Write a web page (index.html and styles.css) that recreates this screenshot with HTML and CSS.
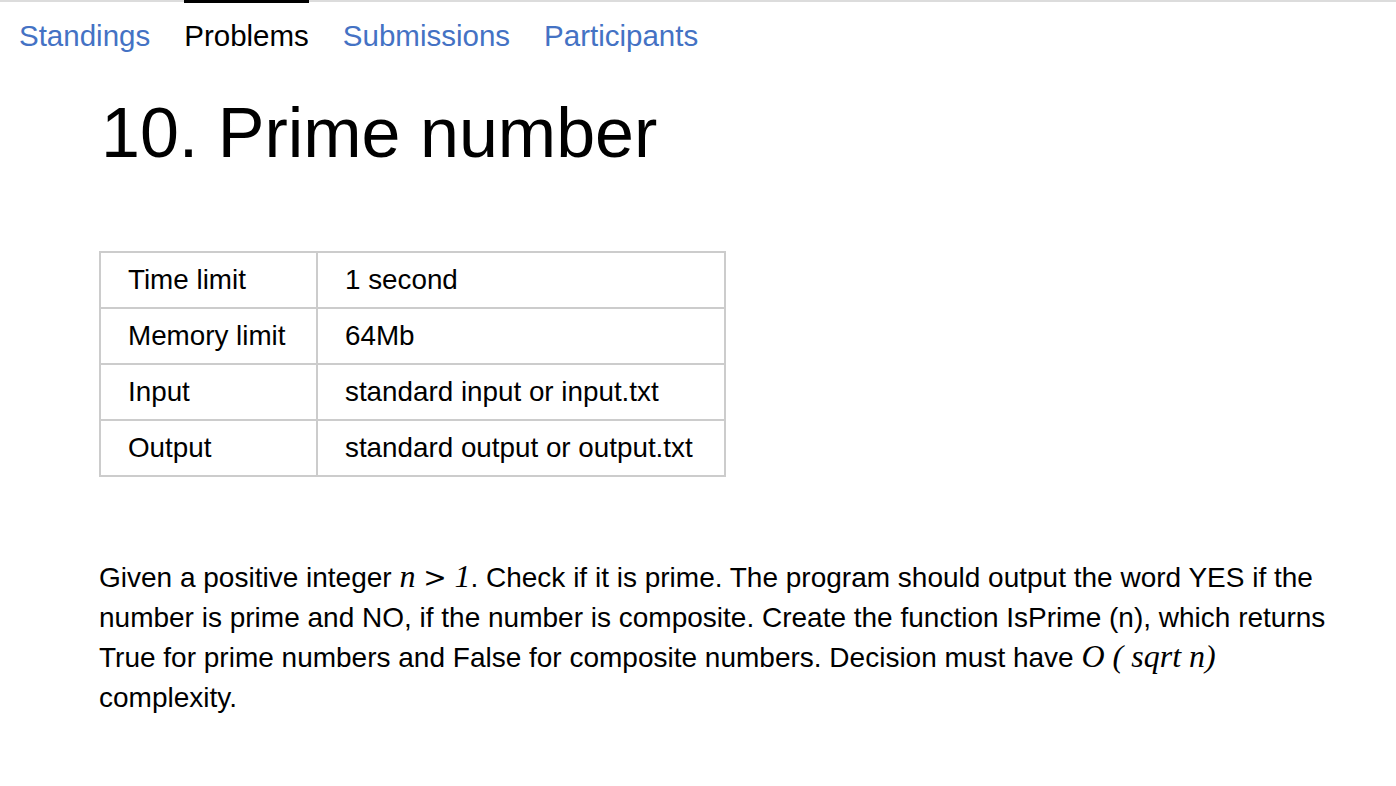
FILE: index.html
```html
<!DOCTYPE html>
<html>
<head>
<meta charset="utf-8">
<link rel="stylesheet" href="styles.css">
</head>
<body>
<nav class="tabs">
  <a class="tab" href="#">Standings</a>
  <a class="tab active" href="#">Problems</a>
  <a class="tab" href="#">Submissions</a>
  <a class="tab" href="#">Participants</a>
</nav>
<main class="content">
  <h1 class="title">10. Prime number</h1>
  <table class="limits">
    <tr><td class="key">Time limit</td><td class="val">1 second</td></tr>
    <tr><td class="key">Memory limit</td><td class="val">64Mb</td></tr>
    <tr><td class="key">Input</td><td class="val">standard input or input.txt</td></tr>
    <tr><td class="key">Output</td><td class="val">standard output or output.txt</td></tr>
  </table>
  <p class="statement">Given a positive integer <span class="math">n</span> <span class="op">&gt;</span> <span class="math">1</span>. Check if it is prime. The program should output the word YES if the number is prime and NO, if the number is composite. Create the function IsPrime (n), which returns True for prime numbers and False for composite numbers. Decision must have <span class="math">O ( sqrt n)</span> complexity.</p>
</main>
</body>
</html>
```

FILE: styles.css
```css
html, body {
  margin: 0;
  padding: 0;
  background: #fff;
  color: #000;
  font-family: "Liberation Sans", Arial, sans-serif;
}

.tabs {
  display: flex;
  gap: 34px;
  padding: 0 0 0 19px;
  border-top: 2px solid #dcdcdc;
}

.tab {
  display: block;
  font-size: 29.5px;
  line-height: 30px;
  padding: 18px 0 16px;
  margin-top: -2px;
  border-top: 3px solid transparent;
  color: #4472c4;
  text-decoration: none;
}

.tab.active {
  color: #000;
  border-top-color: #000;
}

.content {
  padding-left: 99px;
}

.title {
  margin: 0;
  padding-top: 26px;
  font-size: 70px;
  font-weight: normal;
  line-height: 80px;
  padding-left: 2px;
}

.limits {
  margin-top: 78px;
  border-collapse: collapse;
  font-size: 27.8px;
}

.limits td {
  border: 2px solid #cccccc;
  height: 54px;
  padding: 0 0 0 27px;
  vertical-align: middle;
}

.limits .key {
  width: 188px;
}

.limits .val {
  width: 379px;
}

.statement {
  margin: 81px 0 0 0;
  width: 1240px;
  font-size: 28px;
  line-height: 40px;
}

.math {
  font-family: "Liberation Serif", "Times New Roman", serif;
  font-style: italic;
  font-size: 32px;
  line-height: 0;
}

.op {
  font-family: "DejaVu Serif", "Liberation Serif", serif;
  font-size: 28px;
  line-height: 0;
}
```
